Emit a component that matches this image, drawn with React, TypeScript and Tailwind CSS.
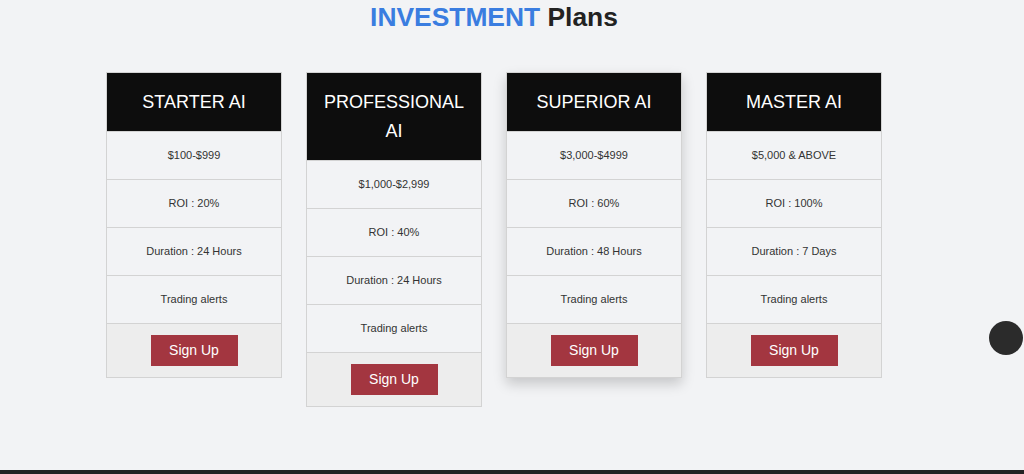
const plans = [
    { name: 'STARTER AI', range: '$100-$999', roi: '20%', duration: '24 Hours' },
    { name: 'PROFESSIONAL AI', range: '$1,000-$2,999', roi: '40%', duration: '24 Hours' },
    { name: 'SUPERIOR AI', range: '$3,000-$4999', roi: '60%', duration: '48 Hours', featured: true },
    { name: 'MASTER AI', range: '$5,000 & ABOVE', roi: '100%', duration: '7 Days' },
];

export default function App() {
    return (
        <div className="w-full min-h-[474px] bg-[#f2f3f5] font-['Liberation_Sans',Arial,sans-serif] relative overflow-hidden">
            <section className="h-[470px] w-[988px] flex flex-col items-center">
                <h2 className="mt-[2px] text-[26.4px] leading-[30px] font-bold">
                    <span className="text-[#3a7de0]">INVESTMENT</span> <span className="text-[#222]">Plans</span>
                </h2>
                <div className="mt-[40px] flex items-start gap-6">
                    {plans.map((p) => (
                        <PlanCard key={p.name} {...p} />
                    ))}
                </div>
            </section>
            <div className="h-[4px] bg-[#232323]" />
            <div className="absolute right-[1px] top-[321px] w-[34px] h-[34px] rounded-full bg-[#2b2b2b]" />
        </div>
    );
}

function PlanCard({ name, range, roi, duration, featured }: any) {
    return (
        <div
            className={`w-[176px] border border-[#d3d3d3] bg-[#f2f3f5] ${featured ? 'shadow-[0_6px_12px_rgba(0,0,0,0.18)]' : ''}`}
        >
            <div className="bg-[#0d0d0d] px-4 pt-[15px] pb-[14px] text-center text-white text-[18px] leading-[29px]">{name}</div>
            <Row>{range}</Row>
            <Row>ROI : {roi}</Row>
            <Row>Duration : {duration}</Row>
            <Row>Trading alerts</Row>
            <div className="border-t border-[#d3d3d3] bg-[#ededed] flex justify-center pt-[11px] pb-[11px]">
                <button className="w-[87px] h-[31px] bg-[#a33640] text-white text-[14px]">Sign Up</button>
            </div>
        </div>
    );
}

function Row({ children }: any) {
    return (
        <div className="h-[48px] border-t border-[#d3d3d3] flex items-center justify-center text-[11px] text-[#333]">
            {children}
        </div>
    );
}
